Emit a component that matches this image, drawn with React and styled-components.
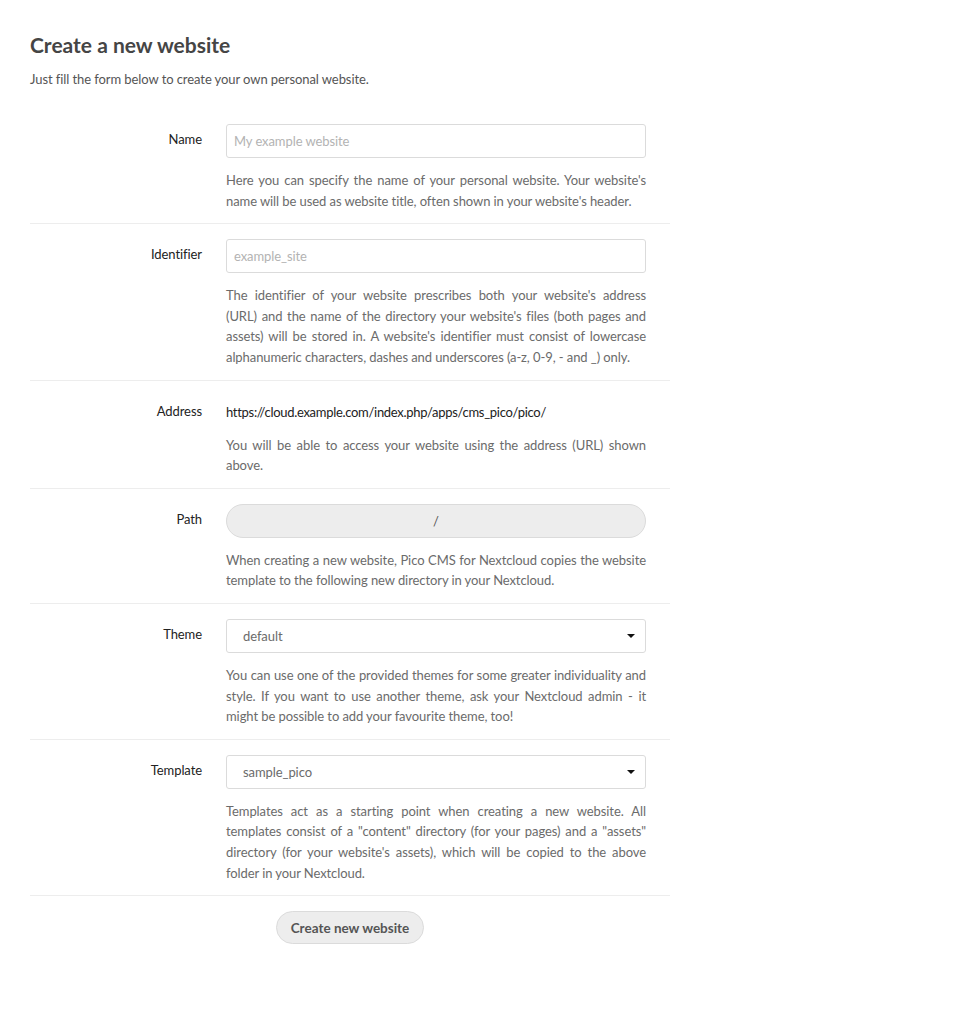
import React from 'react';
import styled, { createGlobalStyle } from 'styled-components';

const GlobalStyle = createGlobalStyle`
  body {
    margin: 0;
    background: #ffffff;
    font-family: 'Lato', 'Noto Sans', sans-serif;
    font-size: 13px;
    letter-spacing: -0.08px;
    color: #222222;
  }
`;

const Page = styled.div`
  padding: 30px 30px 40px 30px;
`;

const Title = styled.h2`
  margin: 0;
  font-size: 21px;
  line-height: 30px;
  font-weight: 700;
  letter-spacing: 0;
  color: #454545;
`;

const Intro = styled.p`
  margin: 9px 0 0 0;
  line-height: 20px;
  color: #555555;
`;

const Form = styled.form`
  width: 640px;
  margin-top: 20px;
`;

const Row = styled.div`
  display: grid;
  grid-template-columns: 172px 420px;
  column-gap: 24px;
  padding: 15px 0 12px 0;
  border-bottom: 1px solid #ededed;
`;

const Label = styled.label`
  grid-row: 1;
  text-align: right;
  line-height: 31px;
  color: #222222;
`;

const Field = styled.div`
  grid-column: 2;
  display: flex;
  flex-direction: column;
  gap: ${(p) => (p.$tight ? '6px' : '12px')};
`;

const TextInput = styled.input`
  box-sizing: border-box;
  height: 34px;
  width: 100%;
  margin: 0;
  padding: 0 7px;
  border: 1px solid #dbdbdb;
  border-radius: 3px;
  font: inherit;
  letter-spacing: inherit;
  color: #222222;
  background: #ffffff;
  &::placeholder {
    color: #b3b3b3;
  }
`;

const Value = styled.div`
  line-height: 33px;
  letter-spacing: -0.3px;
  color: #222222;
`;

const PathPill = styled.div`
  box-sizing: border-box;
  height: 34px;
  line-height: 32px;
  border: 1px solid #dbdbdb;
  border-radius: 17px;
  background: #ededed;
  text-align: center;
  color: #555555;
`;

const Select = styled.div`
  box-sizing: border-box;
  height: 34px;
  display: flex;
  align-items: center;
  justify-content: space-between;
  padding: 0 10px 0 16px;
  border: 1px solid #dbdbdb;
  border-radius: 3px;
  color: #6b6b6b;
  background: #ffffff;
`;

const Caret = styled.span`
  width: 0;
  height: 0;
  border-left: 4px solid transparent;
  border-right: 4px solid transparent;
  border-top: 4px solid #111111;
`;

const Help = styled.p`
  margin: 0;
  line-height: 20.6px;
  color: #6b6b6b;
`;

const HelpLine = styled.span`
  display: block;
  text-align: justify;
  text-align-last: ${(p) => (p.$last ? 'left' : 'justify')};
`;

const Actions = styled.div`
  display: flex;
  justify-content: center;
  padding-top: 15px;
`;

const Button = styled.button`
  height: 33px;
  padding: 0 14px;
  border: 1px solid #dbdbdb;
  border-radius: 17px;
  background: #ededed;
  font: inherit;
  font-size: 13.5px;
  font-weight: 700;
  letter-spacing: 0;
  color: #555555;
`;

const HelpText = ({ lines }) => (
  <Help>
    {lines.map((line, i) => (
      <HelpLine key={i} $last={i === lines.length - 1}>
        {line}
      </HelpLine>
    ))}
  </Help>
);

const App = () => (
  <>
    <GlobalStyle />
    <Page>
      <Title>Create a new website</Title>
      <Intro>Just fill the form below to create your own personal website.</Intro>
      <Form onSubmit={(e) => e.preventDefault()}>
        <Row>
          <Label>Name</Label>
          <Field>
            <TextInput placeholder="My example website" />
            <HelpText
              lines={[
                "Here you can specify the name of your personal website. Your website's",
                "name will be used as website title, often shown in your website's header.",
              ]}
            />
          </Field>
        </Row>
        <Row>
          <Label>Identifier</Label>
          <Field>
            <TextInput placeholder="example_site" />
            <HelpText
              lines={[
                "The identifier of your website prescribes both your website's address",
                '(URL) and the name of the directory your website\'s files (both pages and',
                "assets) will be stored in. A website's identifier must consist of lowercase",
                'alphanumeric characters, dashes and underscores (a-z, 0-9, - and _) only.',
              ]}
            />
          </Field>
        </Row>
        <Row>
          <Label>Address</Label>
          <Field $tight>
            <Value>https://cloud.example.com/index.php/apps/cms_pico/pico/</Value>
            <HelpText
              lines={[
                'You will be able to access your website using the address (URL) shown',
                'above.',
              ]}
            />
          </Field>
        </Row>
        <Row>
          <Label>Path</Label>
          <Field>
            <PathPill>/</PathPill>
            <HelpText
              lines={[
                'When creating a new website, Pico CMS for Nextcloud copies the website',
                'template to the following new directory in your Nextcloud.',
              ]}
            />
          </Field>
        </Row>
        <Row>
          <Label>Theme</Label>
          <Field>
            <Select>
              <span>default</span>
              <Caret />
            </Select>
            <HelpText
              lines={[
                'You can use one of the provided themes for some greater individuality and',
                'style. If you want to use another theme, ask your Nextcloud admin - it',
                'might be possible to add your favourite theme, too!',
              ]}
            />
          </Field>
        </Row>
        <Row>
          <Label>Template</Label>
          <Field>
            <Select>
              <span>sample_pico</span>
              <Caret />
            </Select>
            <HelpText
              lines={[
                'Templates act as a starting point when creating a new website. All',
                'templates consist of a "content" directory (for your pages) and a "assets"',
                "directory (for your website's assets), which will be copied to the above",
                'folder in your Nextcloud.',
              ]}
            />
          </Field>
        </Row>
        <Actions>
          <Button type="submit">Create new website</Button>
        </Actions>
      </Form>
    </Page>
  </>
);

export default App;
